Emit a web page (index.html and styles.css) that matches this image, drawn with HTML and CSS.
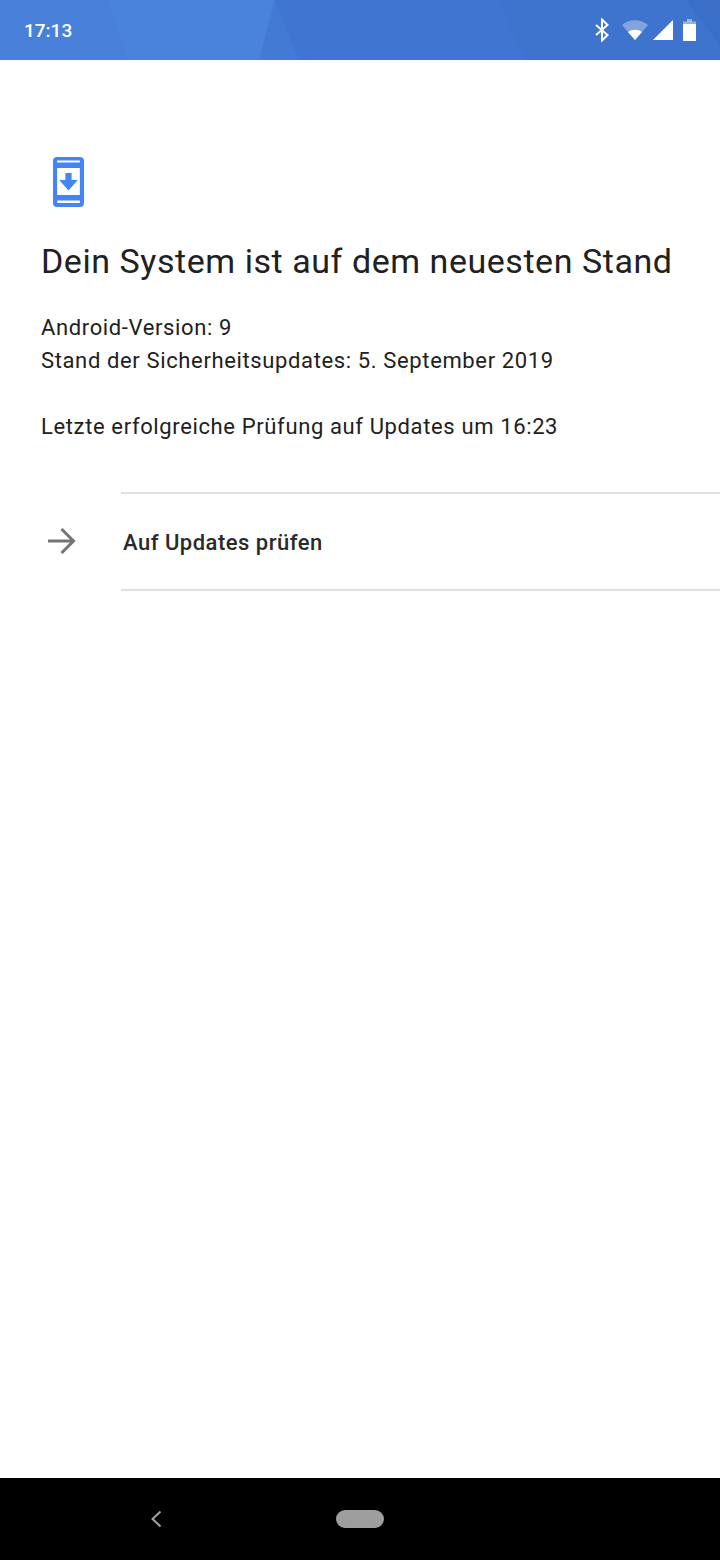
FILE: index.html
```html
<!DOCTYPE html>
<html lang="en">
<head>
    <meta charset="UTF-8">
    <meta name="viewport" content="width=device-width, initial-scale=1.0">
    <title>Systemupdate</title>
    <link rel="stylesheet" href="styles.css">
</head>
<body>
    <!-- Status Bar -->
    <div class="status-bar">
        <svg class="status-bg" width="720" height="60" viewBox="0 0 720 60">
            <rect width="720" height="60" fill="#437bd4"/>
            <polygon points="0,0 275,0 259,60 0,60" fill="#4a83db"/>
            <polygon points="0,0 108,0 128,60 0,60" fill="#4980d9"/>
            <polygon points="275,0 498,0 525,60 298,60" fill="#4076d1"/>
            <polygon points="498,0 720,0 720,60 525,60" fill="#3e74cd"/>
            <polygon points="686,0 720,0 720,45" fill="#3a6ec7"/>
        </svg>
        <span class="clock">17:13</span>
        <div class="status-icons">
            <svg class="bt" width="16" height="24" viewBox="0 0 16 24">
                <path d="M2 7 L13.500 17 L8 22.500 V1.500 L13.500 7 L2 17" fill="none" stroke="#fff" stroke-width="2"/>
            </svg>
            <svg class="wifi" width="26" height="20" viewBox="0 0 26 20">
                <path d="M0 5 C7 -1.500 19 -1.500 26 5 L13 20 Z" fill="#fff" fill-opacity="0.35"/>
                <path d="M6 12 C10 9 16 9 20 12 L13 20 Z" fill="#fff"/>
            </svg>
            <svg class="signal" width="20" height="20" viewBox="0 0 20 20">
                <polygon points="20,0 20,20 0,20" fill="#fff"/>
            </svg>
            <svg class="battery" width="13" height="22" viewBox="0 0 13 22">
                <rect x="4" y="0" width="5" height="3" fill="#fff" fill-opacity="0.45"/>
                <rect x="0" y="2.500" width="13" height="3" fill="#fff" fill-opacity="0.45"/>
                <rect x="0" y="5" width="13" height="17" fill="#fff"/>
            </svg>
        </div>
    </div>

    <!-- Main Content -->
    <div class="content">
        <svg class="update-icon" width="31" height="50" viewBox="0 0 30 50" preserveAspectRatio="none">
            <path fill-rule="evenodd" fill="#4285f4" d="M4 0 H26 A4 4 0 0 1 30 4 V46 A4 4 0 0 1 26 50 H4 A4 4 0 0 1 0 46 V4 A4 4 0 0 1 4 0 Z M4 3.500 V5.500 H26 V3.500 Z M4 11 V38 H26 V11 Z M4 43.500 V46 H26 V43.500 Z"/>
            <path fill="#4285f4" d="M12 16 H18 V23 H24 L15 33.500 L6 23 H12 Z"/>
        </svg>
        <h1 class="title">Dein System ist auf dem neuesten Stand</h1>
        <p class="info">Android-Version: 9<br>Stand der Sicherheitsupdates: 5. September 2019</p>
        <p class="info last-check">Letzte erfolgreiche Prüfung auf Updates um 16:23</p>
    </div>

    <!-- Check Button -->
    <div class="check-row">
        <div class="check-icon">
            <svg width="30" height="28" viewBox="0 0 30 28">
                <path d="M2 14 H27 M15.500 2 L27.500 14 L15.500 26" fill="none" stroke="#757575" stroke-width="3"/>
            </svg>
        </div>
        <div class="check-label">Auf Updates prüfen</div>
    </div>

    <!-- Navigation Bar -->
    <div class="nav-bar">
        <svg class="nav-back" width="12" height="18" viewBox="0 0 12 18">
            <path d="M10.500 1.500 L2.500 9 L10.500 16.500" fill="none" stroke="#a3a3a3" stroke-width="2"/>
        </svg>
        <div class="nav-home"></div>
    </div>
</body>
</html>
```

FILE: styles.css
```css
* {
    margin: 0;
    padding: 0;
    box-sizing: border-box;
}
body {
    font-family: 'Roboto', sans-serif;
    width: 720px;
    height: 1560px;
    background-color: #fff;
    color: #212121;
    display: flex;
    flex-direction: column;
    overflow: hidden;
}
.status-bar {
    position: relative;
    height: 60px;
    display: flex;
    align-items: center;
    justify-content: space-between;
    padding: 0 24px;
    color: #fff;
    flex-shrink: 0;
}
.status-bg {
    position: absolute;
    top: 0;
    left: 0;
}
.clock {
    position: relative;
    font-size: 19px;
    font-weight: 500;
}
.status-icons {
    position: relative;
    display: flex;
    align-items: center;
}
.wifi {
    margin-left: 12px;
}
.signal {
    margin-left: 5px;
}
.battery {
    margin-left: 10px;
}
.content {
    padding: 97px 41px 0;
}
.update-icon {
    display: block;
    margin-left: 11.5px;
}
.title {
    font-size: 34px;
    font-weight: 400;
    line-height: 44px;
    margin-top: 32px;
    white-space: nowrap;
    letter-spacing: 0.55px;
}
.info {
    font-size: 22px;
    line-height: 33px;
    margin-top: 28px;
    white-space: nowrap;
    letter-spacing: 0.63px;
}
.last-check {
    margin-top: 33px;
}
.check-row {
    display: flex;
    align-items: center;
    height: 99px;
    margin-top: 49px;
    margin-left: 121px;
    padding-top: 2px;
    border-top: 2px solid #e0e0e0;
    border-bottom: 2px solid #e0e0e0;
    position: relative;
}
.check-icon {
    position: absolute;
    left: -75px;
    top: 33px;
    display: flex;
}
.check-label {
    font-size: 22px;
    font-weight: 500;
    margin-left: 2px;
    letter-spacing: 0.5px;
    color: #2a2a2a;
}
.nav-bar {
    margin-top: auto;
    height: 82px;
    background-color: #000;
    display: flex;
    align-items: center;
    gap: 174px;
    padding-left: 150px;
    flex-shrink: 0;
}
.nav-home {
    width: 48px;
    height: 18px;
    border-radius: 9px;
    background-color: #9e9e9e;
}
```
